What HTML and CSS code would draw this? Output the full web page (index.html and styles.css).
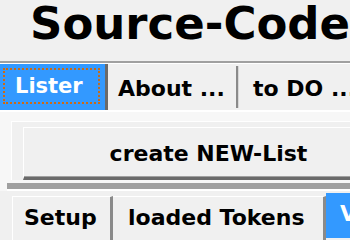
FILE: index.html
```html
<!DOCTYPE html>
<html>
<head>
<meta charset="utf-8">
<link rel="stylesheet" href="styles.css">
</head>
<body>
<div class="app">
  <div class="title">Source-Code</div>
  <div class="rule"></div>
  <div class="tabs top-tabs">
    <div class="tab sel"><span class="focus">Lister</span></div>
    <div class="tab about">About ...</div>
    <div class="tab todo">to DO ...</div>
  </div>
  <div class="sheet">
    <div class="inner">
      <div class="btn">create NEW-List</div>
    </div>
    <div class="band"></div>
    <div class="tabs bottom-tabs">
      <div class="tab setup">Setup</div>
      <div class="tab tokens">loaded Tokens</div>
      <div class="tab sel vtab">Vars</div>
    </div>
  </div>
</div>
</body>
</html>
```
FILE: styles.css
```css
html, body {
  margin: 0;
  padding: 0;
  background: #f0f0f0;
  overflow: hidden;
}
.app {
  width: 350px;
  height: 240px;
  overflow: hidden;
  font-family: "DejaVu Sans", Verdana, sans-serif;
  font-weight: bold;
  color: #000;
}
.title {
  height: 59px;
  padding: 2px 0 0 30px;
  font-size: 45px;
  line-height: 44px;
  white-space: nowrap;
}
.rule {
  height: 2px;
  background: #a0a0a0;
  border-bottom: 1px solid #ffffff;
}
.tabs {
  display: flex;
  align-items: flex-start;
  white-space: nowrap;
}
.top-tabs {
  height: 46px;
}
.tab {
  box-sizing: border-box;
  flex: none;
  font-size: 22px;
}
.top-tabs .tab {
  height: 42px;
  margin-top: 2px;
  padding-top: 5px;
  line-height: 36px;
  border-right: 2px solid #8a8a8a;
  box-shadow: 1px 0 0 #d8d8d8;
}
.top-tabs .tab.sel {
  width: 108px;
  height: 46px;
  margin-top: 0;
  padding: 4px 5px 6px 3px;
  background: #3399ff;
  color: #fff;
  font-size: 21px;
  border-right: 3px solid #6a6a6a;
  box-shadow: none;
}
.focus {
  display: block;
  box-sizing: border-box;
  height: 36px;
  line-height: 32px;
  padding-left: 10px;
  border: 2px dotted #cc6a14;
}
.about {
  width: 130px;
  padding-left: 10px;
}
.todo {
  width: 130px;
  padding-left: 15px;
}
.sheet {
  border-top: 2px solid #ffffff;
  background: #f7f7f7;
}
.inner {
  margin: 9px 0 0 11px;
  padding: 5px 0 0 11px;
  background: #f0f0f0;
  border-top: 1px solid #ffffff;
  border-left: 1px solid #ffffff;
}
.btn {
  box-sizing: border-box;
  width: 370px;
  height: 53px;
  border-top: 1px solid #ffffff;
  border-left: 1px solid #ffffff;
  border-bottom: 3px solid #6a6a6a;
  box-shadow: inset 0 -1px 0 #a0a0a0;
  text-align: center;
  font-size: 22px;
  line-height: 48px;
  padding-top: 2px;
}
.band {
  margin: 3px 0 0 7px;
  height: 6px;
  background: #a0a0a0;
  border-bottom: 2px solid #ffffff;
}
.bottom-tabs {
  margin-top: 0;
  padding-top: 2px;
  height: 50px;
  background: #f0f0f0;
}
.bottom-tabs .tab {
  margin-top: 3px;
  height: 45px;
  padding-top: 6px;
  line-height: 30px;
  font-size: 22px;
  border-top: 1px solid #ffffff;
  border-right: 3px solid #8a8a8a;
}
.setup {
  margin-left: 12px;
  width: 101px;
  padding-left: 11px;
  border-left: 1px solid #ffffff;
}
.tokens {
  width: 213px;
  padding-left: 15px;
}
.bottom-tabs .tab.vtab {
  margin-top: 0;
  margin-left: 0;
  width: 60px;
  padding-left: 14px;
  background: #3399ff;
  color: #fff;
  border: none;
}
```
